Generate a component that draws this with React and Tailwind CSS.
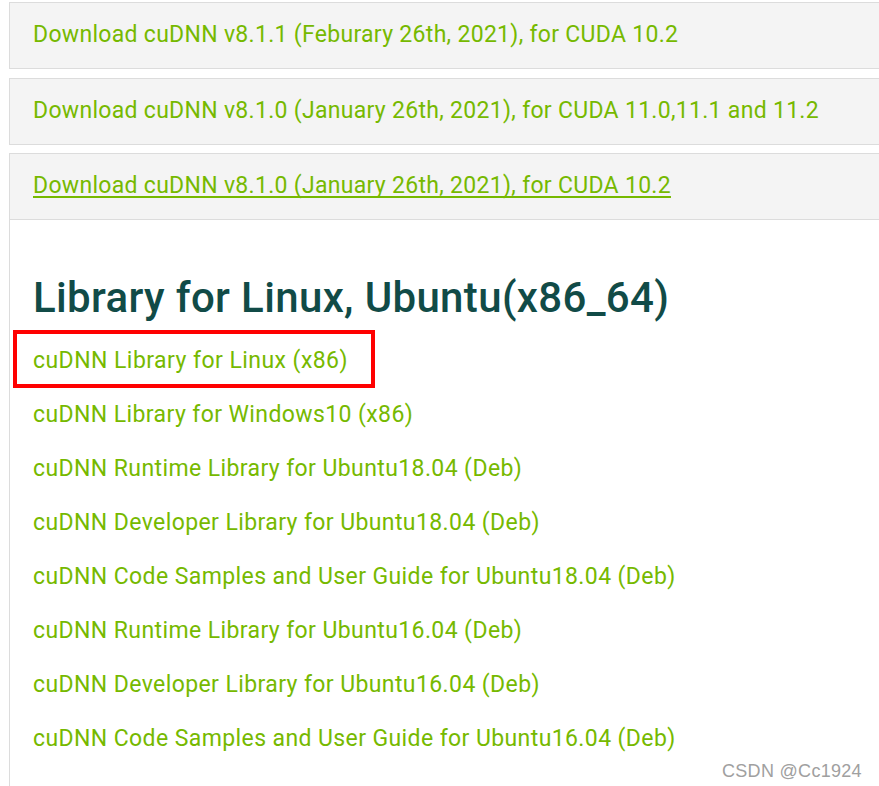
import React from "react";

const downloads = [
  { text: "Download cuDNN v8.1.1 (Feburary 26th, 2021), for CUDA 10.2", u: false },
  { text: "Download cuDNN v8.1.0 (January 26th, 2021), for CUDA 11.0,11.1 and 11.2", u: false },
  { text: "Download cuDNN v8.1.0 (January 26th, 2021), for CUDA 10.2", u: true },
];

const links = [
  "cuDNN Library for Windows10 (x86)",
  "cuDNN Runtime Library for Ubuntu18.04 (Deb)",
  "cuDNN Developer Library for Ubuntu18.04 (Deb)",
  "cuDNN Code Samples and User Guide for Ubuntu18.04 (Deb)",
  "cuDNN Runtime Library for Ubuntu16.04 (Deb)",
  "cuDNN Developer Library for Ubuntu16.04 (Deb)",
  "cuDNN Code Samples and User Guide for Ubuntu16.04 (Deb)",
];

export default function App() {
  return (
    <div className="relative w-[879px] h-[786px] overflow-hidden bg-white font-['Roboto',sans-serif]">
      <div className="pt-[2px] pl-[9px] w-[900px]">
        {downloads.map((d, i) => (
          <div
            key={i}
            className={`h-[67px] border border-[#dcdcdc] bg-[#f4f4f4] flex items-center pl-[23px] ${i === 1 ? "mt-[9px]" : ""} ${i === 2 ? "mt-[8px]" : ""}`}
          >
            <span
              className={`text-[23px] text-[#76b900] tracking-[0.3px] leading-none -mt-[2px] ${d.u ? "underline decoration-[#76b900] decoration-[1.5px] underline-offset-[3px] [text-decoration-skip-ink:none]" : ""}`}
            >
              {d.text}
            </span>
          </div>
        ))}
        <div className="border-l border-[#dcdcdc] h-[600px] pl-[23px]">
          <h2 className="pt-[52px] text-[42px] leading-[52px] font-medium text-[#114b47] tracking-[0.35px]">
            Library for Linux, Ubuntu(x86_64)
          </h2>
          <div className="mt-[6px] -ml-[20px] w-[362px] h-[58px] border-[4px] border-[#ff0000] flex items-center pl-[16px]">
            <span className="text-[23px] text-[#76b900] leading-none tracking-[0.45px] mt-[3px]">cuDNN Library for Linux (x86)</span>
          </div>
          <div className="flex flex-col -mt-[1px]">
            {links.map((l, i) => (
              <div key={i} className="h-[54px] flex items-center text-[23px] text-[#76b900] leading-none tracking-[0.4px]">
                {l}
              </div>
            ))}
          </div>
        </div>
      </div>
      <div className="absolute left-[722px] top-[758px] text-[18px] tracking-[0.3px] text-[#a0a0a0] font-['Liberation_Sans',sans-serif]">
        CSDN @Cc1924
      </div>
    </div>
  );
}
